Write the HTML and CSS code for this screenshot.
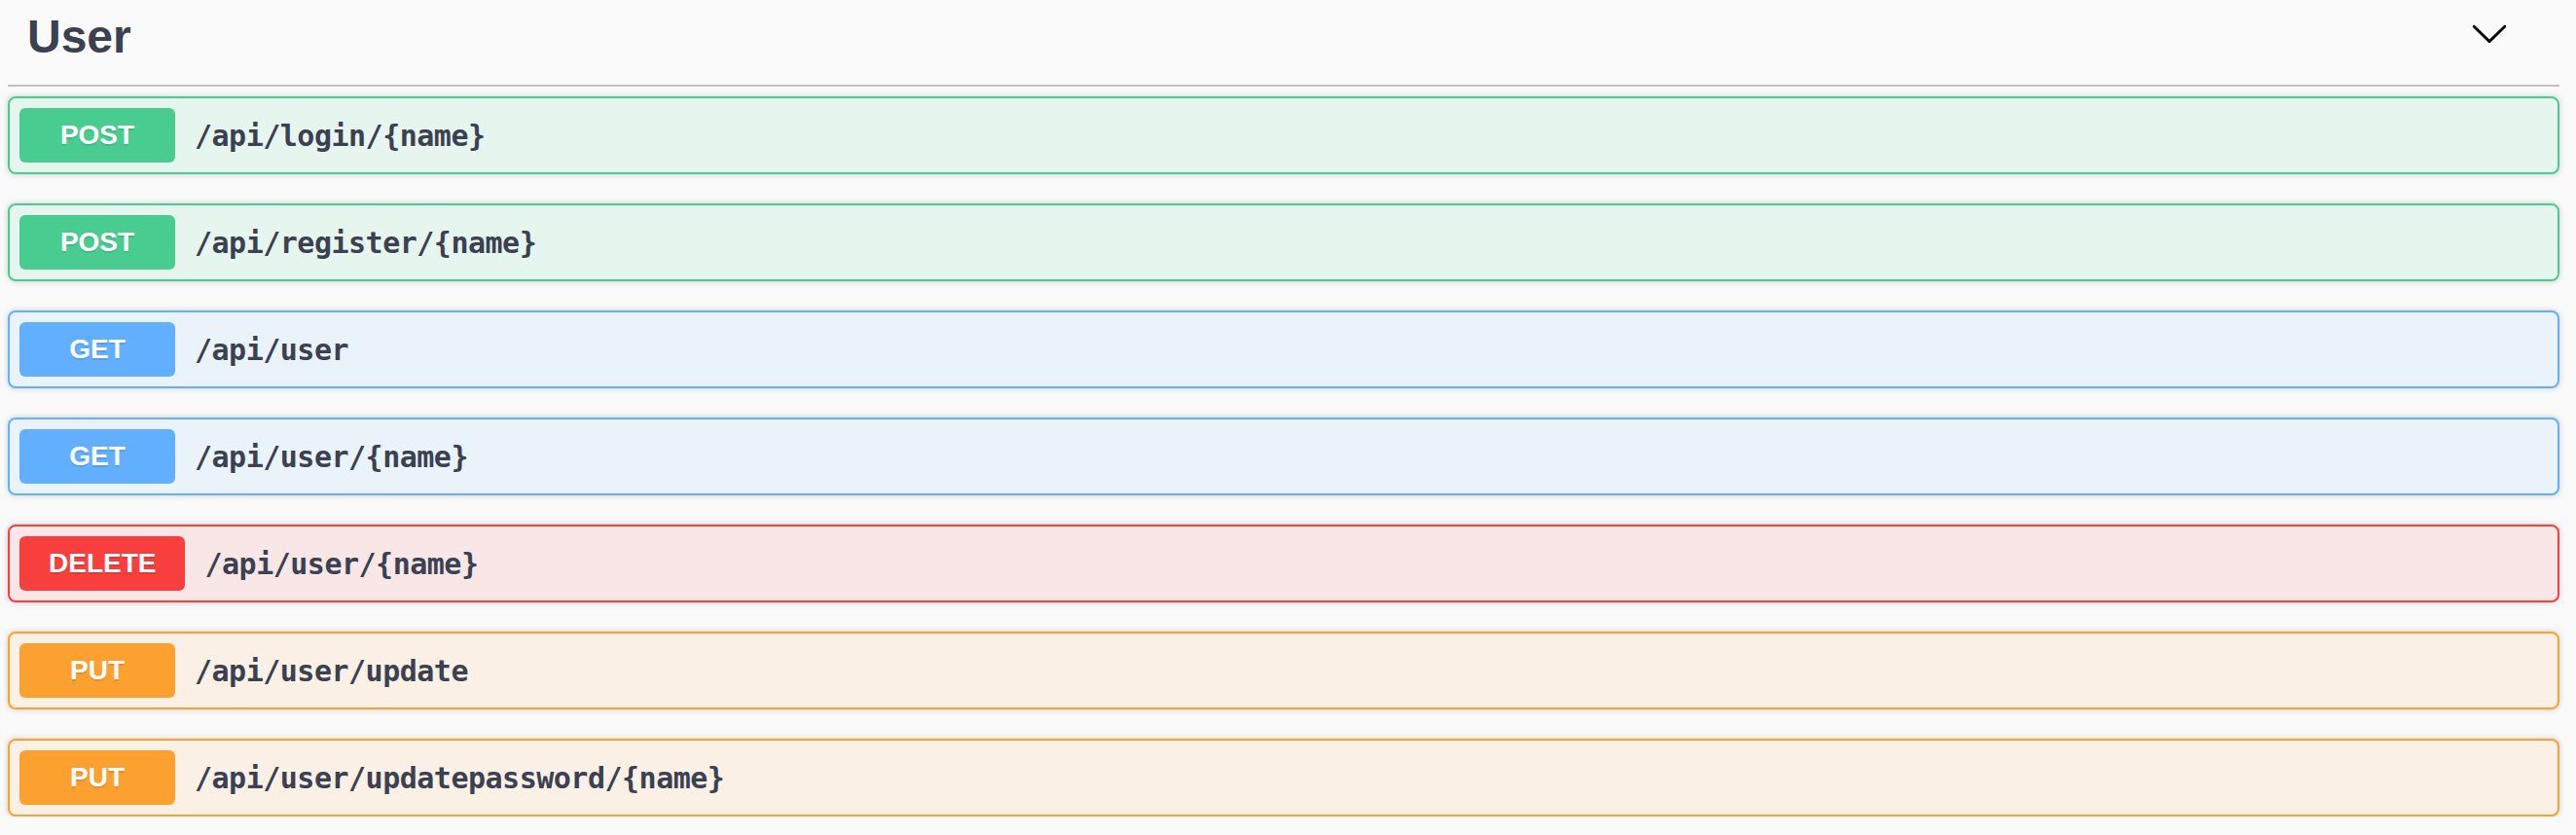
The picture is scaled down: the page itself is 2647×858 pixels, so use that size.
FILE: index.html
```html
<!DOCTYPE html>
<html lang="en">
<head>
<meta charset="utf-8">
<title>User</title>
<link rel="stylesheet" href="styles.css">
</head>
<body>
<div class="tag-section">
  <h3 class="tag-header">
    <span class="tag-name">User</span>
    <svg class="arrow" viewBox="0 0 20 20" width="40" height="40" aria-hidden="true">
      <path d="M17.418 6.109c.272-.268.709-.268.979 0s.271.701 0 .969l-7.908 7.83c-.27.268-.707.268-.979 0l-7.908-7.83c-.27-.268-.27-.701 0-.969.271-.268.709-.268.979 0L10 13.25l7.418-7.141z"/>
    </svg>
  </h3>
  <div class="ops">
    <div class="op op-post"><span class="method">POST</span><span class="path">/api/login/{name}</span></div>
    <div class="op op-post"><span class="method">POST</span><span class="path">/api/register/{name}</span></div>
    <div class="op op-get"><span class="method">GET</span><span class="path">/api/user</span></div>
    <div class="op op-get"><span class="method">GET</span><span class="path">/api/user/{name}</span></div>
    <div class="op op-delete"><span class="method">DELETE</span><span class="path">/api/user/{name}</span></div>
    <div class="op op-put"><span class="method">PUT</span><span class="path">/api/user/update</span></div>
    <div class="op op-put"><span class="method">PUT</span><span class="path">/api/user/updatepassword/{name}</span></div>
  </div>
</div>
</body>
</html>
```

FILE: styles.css
```css
html, body {
  margin: 0;
  padding: 0;
  background: #fafafa;
}

body {
  font-family: "Liberation Sans", Arial, sans-serif;
  color: #3b4151;
}

.tag-section {
  margin: 0 17px 0 8px;
}

.tag-header {
  display: flex;
  align-items: flex-start;
  margin: 0 0 10px;
  padding: 10px 0 22px 20px;
  border-bottom: 2px solid rgba(59, 65, 81, 0.3);
  font-size: 48px;
  line-height: 55px;
  font-weight: bold;
  color: #3b4151;
}

.tag-name {
  flex: 1;
}

.arrow {
  margin-top: 4px;
  margin-right: 52px;
  fill: #000;
  flex: none;
}

.ops {
  display: flex;
  flex-direction: column;
  gap: 30px;
}

.op {
  display: flex;
  align-items: center;
  padding: 10px;
  border: 2px solid;
  border-radius: 8px;
  box-shadow: 0 0 6px rgba(0, 0, 0, 0.19);
}

.method {
  min-width: 160px;
  box-sizing: border-box;
  padding: 12px 30px;
  border-radius: 6px;
  color: #fff;
  font-size: 28px;
  line-height: 32px;
  font-weight: bold;
  text-align: center;
  text-shadow: 0 2px 0 rgba(0, 0, 0, 0.1);
}

.path {
  padding: 0 20px;
  font-family: "DejaVu Sans Mono", "Liberation Mono", monospace;
  font-size: 30px;
  letter-spacing: -0.5px;
  font-weight: bold;
  color: #3b4151;
}

.op-post { border-color: #49cc90; background: rgba(73, 204, 144, 0.1); }
.op-post .method { background: #49cc90; }

.op-get { border-color: #61affe; background: rgba(97, 175, 254, 0.1); }
.op-get .method { background: #61affe; }

.op-delete { border-color: #f93e3e; background: rgba(249, 62, 62, 0.1); }
.op-delete .method { background: #f93e3e; }

.op-put { border-color: #fca130; background: rgba(252, 161, 48, 0.1); }
.op-put .method { background: #fca130; }
```
